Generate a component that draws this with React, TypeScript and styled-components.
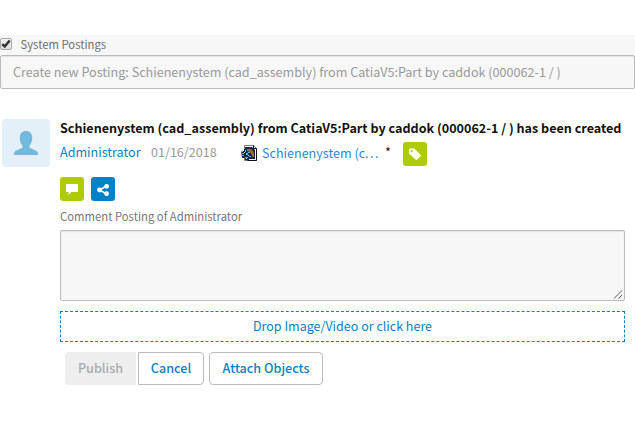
import React from "react";
import styled, { createGlobalStyle } from "styled-components";

const Global = createGlobalStyle`
  * { box-sizing: border-box; }
  html, body { margin: 0; background: #fff; }
  body {
    font-family: "Noto Sans CJK SC", "Noto Sans", sans-serif;
    font-size: 13px;
    line-height: 18px;
    color: #111;
    overflow: hidden;
  }
`;

const Page = styled.main`
  width: 635px;
  height: 424px;
  padding-top: 35px;
  white-space: nowrap;
`;

const Filter = styled.label`
  display: flex;
  align-items: center;
  height: 20px;
  padding-bottom: 2px;
  background: #f7f7f7;
  color: #6f6f6f;
  font-size: 11.3px;
`;

const Check = styled.span`
  display: flex;
  width: 12px;
  height: 12px;
  margin: 0 8.5px 0 0;
  border: 1px solid #aaa;
  border-radius: 2px;
  background: linear-gradient(#f0f0f0, #dedede);
`;

const PostingInput = styled.div`
  height: 34px;
  padding: 7px 12px;
  border: 1px solid #bbb;
  border-radius: 2px;
  background: #f7f7f7;
  box-shadow: inset 0 1px 1px rgba(0, 0, 0, 0.08);
  color: #999;
  font-size: 12.6px;
`;

const Posting = styled.article`
  display: flex;
  gap: 10px;
  padding: 30px 10px 0 2px;
`;

const Avatar = styled.div`
  flex: none;
  width: 48px;
  height: 48px;
  border-radius: 4px;
  background: #e3f0f8;
`;

const Content = styled.section`
  flex: 1;
  min-width: 0;
`;

const Title = styled.h1`
  margin: 0;
  height: 22px;
  font-size: 12.58px;
  font-weight: 700;
  line-height: 17px;
  color: #111;
`;

const Meta = styled.div`
  display: flex;
  align-items: center;
  height: 26px;
  font-size: 12.58px;
`;

const Author = styled.a`
  width: 91px;
  margin-top: -5px;
  color: #0a7fc2;
`;

const PostDate = styled.time`
  width: 90px;
  margin-top: -5px;
  color: #999;
`;

const ObjectLink = styled.a`
  display: flex;
  align-items: center;
  gap: 5px;
  width: 144px;
  margin-top: -2px;
  color: #2f86c8;
`;

const Ellipsis = styled.span`
  letter-spacing: 1.4px;
`;

const Marker = styled.span`
  width: 18px;
  margin-top: -4px;
`;

const Tile = styled.button<{ $color: string }>`
  display: block;
  width: 24px;
  height: 24px;
  padding: 0;
  border: 0;
  border-radius: 3px;
  background: ${(p) => p.$color};
  svg { display: block; }
`;

const Actions = styled.div`
  display: flex;
  gap: 7px;
  margin-top: 10px;
`;

const CommentLabel = styled.div`
  height: 29px;
  padding-top: 6px;
  color: #777;
  font-size: 11.3px;
`;

const CommentBox = styled.div`
  display: flex;
  align-items: flex-end;
  justify-content: flex-end;
  height: 71px;
  border: 1px solid #bbb;
  border-radius: 2px;
  background: #f7f7f7;
  box-shadow: inset 0 1px 1px rgba(0, 0, 0, 0.08);
`;

const DropZone = styled.div`
  height: 31px;
  margin-top: 10px;
  border: 1px dashed #0a82c0;
  color: #0a7fc2;
  font-size: 12.52px;
  line-height: 27px;
  text-align: center;
`;

const Buttons = styled.div`
  display: flex;
  margin: 10px 0 0 5px;
`;

const Button = styled.button<{ $width: number; $kind?: "disabled" | "joined" }>`
  width: ${(p) => p.$width}px;
  height: 33px;
  padding: 0 0 2px;
  border: ${(p) => (p.$kind === "disabled" ? "0" : "1px solid #bbb")};
  border-radius: ${(p) =>
    p.$kind === "disabled" ? "4px 0 0 4px" : p.$kind === "joined" ? "0 4px 4px 0" : "4px"};
  margin-right: ${(p) => (p.$kind === "disabled" ? 2 : 5)}px;
  background: ${(p) => (p.$kind === "disabled" ? "#eee" : "#fff")};
  color: ${(p) => (p.$kind === "disabled" ? "#aaa" : "#0a7fc2")};
  font: 500 12.6px/29px "Noto Sans CJK SC", sans-serif;
`;

const PartIcon = () => (
  <svg width="16" height="16" viewBox="0 0 16 16">
    <path d="M3.5 .5h9l3 3v12h-12z" fill="#fff" stroke="#777" />
    <path d="M12.5 .5v3h3v12h-9" fill="none" stroke="#111" />
    <path d="M4 2h7l3 3v9H8L5 9z" fill="#172344" />
    <path d="M6 4q6-1 7 5v3h-2q0-5-5-6z" fill="#a56345" />
    <path d="M0 6h3V4h3v3h3v3h2v3H8v2H4v-2H1z" fill="#0a2942" />
    <path d="M0 6h2v1H0zM1 8h2v1H1zM4 5h1v2H4zM5 8h2v2H5zM8 11h2v1H8zM4 12h3v1H4zM1 10h2v1H1zM7 7h2v1H7z" fill="#53b5e4" />
    <path d="M3 7h1v1H3zM7 10h1v1H7zM5 13h1v1H5z" fill="#e4dfa1" />
  </svg>
);

export default function App() {
  return (
    <>
      <Global />
      <Page>
        <Filter>
          <Check>
            <svg width="10" height="10" viewBox="0 0 10 10">
              <path d="M1.3 5.2 3.7 7.5 8.7 1.5" fill="none" stroke="#333" strokeWidth="2.5" />
            </svg>
          </Check>
          <span>System Postings</span>
        </Filter>
        <PostingInput>
          <span>Create new Posting: Schienenystem (cad_assembly) from CatiaV5:Part by caddok (000062-1 / )</span>
        </PostingInput>
        <Posting>
          <Avatar>
            <svg width="48" height="48" viewBox="0 0 48 48">
              <path
                d="M24 12c4 0 6.2 2.5 6.2 6.5 0 3.5-.8 6-2.7 8v2c2.5 1.800 8.5 3 8.5 6V36H12v-1.500c0-3 6-4.200 8.5-6v-2c-1.900-2-2.700-4.500-2.700-8 0-4 2.200-6.500 6.200-6.500z"
                fill="#73b8df"
              />
            </svg>
          </Avatar>
          <Content>
            <Title><span>Schienenystem (cad_assembly) from CatiaV5:Part by caddok (000062-1 / ) has been created</span></Title>
            <Meta>
              <Author>Administrator</Author>
              <PostDate>01/16/2018</PostDate>
              <ObjectLink>
                <PartIcon />
                <span>Schienenystem (c<Ellipsis>...</Ellipsis></span>
              </ObjectLink>
              <Marker>*</Marker>
              <Tile $color="#aecb05" aria-label="Tag">
                <svg width="24" height="24" viewBox="0 0 24 24">
                  <path
                    fillRule="evenodd"
                    d="M6 7.5Q6 6.5 7 6.5h4.2L17.7 13q.6.6 0 1.2L14 17.8q-.6.6-1.2 0L6 11.5zM8.7 8a1.1 1.1 0 1 0 0 2.2 1.1 1.1 0 0 0 0-2.2z"
                    fill="#fff"
                  />
                </svg>
              </Tile>
            </Meta>
            <Actions>
              <Tile $color="#aecb05" aria-label="Comment">
                <svg width="24" height="24" viewBox="0 0 24 24">
                  <path d="M6.5 7h11q.5 0 .5.5v7q0 .5-.5.5H11.500l-3 3v-3h-2q-.5 0-.5-.5v-7q0-.5.5-.5z" fill="#fff" />
                </svg>
              </Tile>
              <Tile $color="#0581c8" aria-label="Share">
                <svg width="24" height="24" viewBox="0 0 24 24">
                  <path d="M15.5 9 8.5 13l7 4" fill="none" stroke="#fff" strokeWidth="1.5" />
                  <g fill="#fff">
                    <circle cx="15.6" cy="9.3" r="2.4" />
                    <circle cx="8.5" cy="13" r="2.4" />
                    <circle cx="15.6" cy="16.7" r="2.4" />
                  </g>
                </svg>
              </Tile>
            </Actions>
            <CommentLabel><span>Comment Posting of Administrator</span></CommentLabel>
            <CommentBox>
              <svg width="11" height="11" viewBox="0 0 11 11">
                <path d="M1 9.5 9 1.5M5.5 9.5 9 6" stroke="#555" fill="none" />
              </svg>
            </CommentBox>
            <DropZone>Drop Image/Video or click here</DropZone>
            <Buttons>
              <Button $width={71} $kind="disabled">Publish</Button>
              <Button $width={66} $kind="joined">Cancel</Button>
              <Button $width={114}>Attach Objects</Button>
            </Buttons>
          </Content>
        </Posting>
      </Page>
    </>
  );
}
